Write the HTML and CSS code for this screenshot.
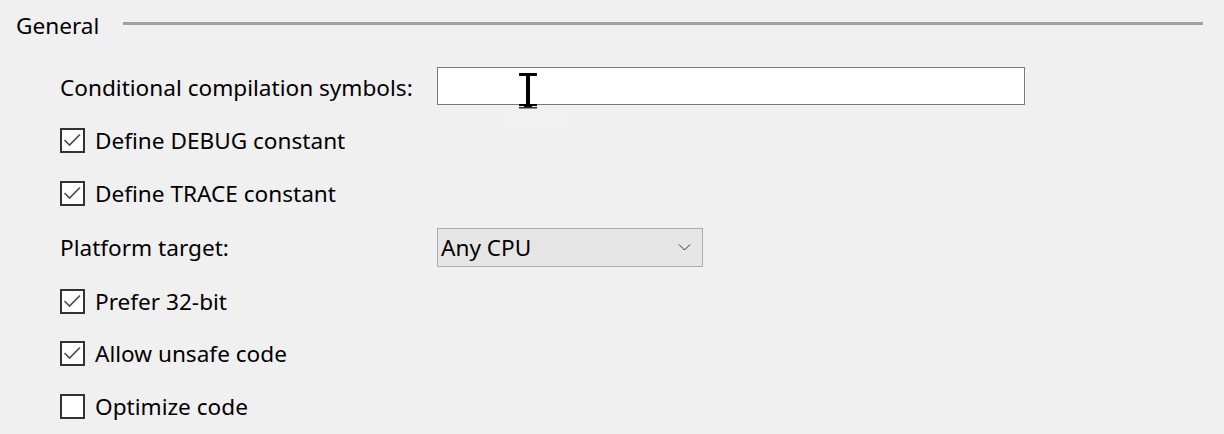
FILE: index.html
```html
<!DOCTYPE html>
<html>
<head>
<meta charset="utf-8">
<link rel="stylesheet" href="styles.css">
</head>
<body>
<div class="page">
  <div class="section-head">
    <span class="section-title">General</span>
    <span class="section-rule"></span>
  </div>
  <div class="form">
    <div class="row r1">
      <label class="label">Conditional compilation symbols:</label>
      <div class="textbox">
        <span class="hint"></span>
        <svg class="ibeam" width="20" height="36" viewBox="0 0 20 36"><path d="M0 0h8v3h-2v28h2v3h-8v-3h2v-28h-2z" fill="#000" transform="translate(6 0)"/><rect x="1" y="0" width="18" height="3" fill="#000"/><rect x="1" y="31" width="18" height="2" fill="#000"/><rect x="1" y="34" width="18" height="1.5" fill="#333"/></svg>
      </div>
    </div>
    <div class="row r2">
      <span class="check on"><svg viewBox="0 0 25 25" width="25" height="25"><path d="M4.5 12l5 5l10.5-10.5" fill="none" stroke="#4a4a4a" stroke-width="1.6"/></svg></span>
      <span class="clabel">Define DEBUG constant</span>
    </div>
    <div class="row r3">
      <span class="check on"><svg viewBox="0 0 25 25" width="25" height="25"><path d="M4.5 12l5 5l10.5-10.5" fill="none" stroke="#4a4a4a" stroke-width="1.6"/></svg></span>
      <span class="clabel">Define TRACE constant</span>
    </div>
    <div class="row r4">
      <label class="label">Platform target:</label>
      <div class="combo">
        <span class="combo-text">Any CPU</span>
        <svg class="chev" width="13" height="8" viewBox="0 0 13 8"><path d="M1 1.5l5.5 5.5l5.5-5.5" fill="none" stroke="#333" stroke-width="1"/></svg>
      </div>
    </div>
    <div class="row r5">
      <span class="check on"><svg viewBox="0 0 25 25" width="25" height="25"><path d="M4.5 12l5 5l10.5-10.5" fill="none" stroke="#4a4a4a" stroke-width="1.6"/></svg></span>
      <span class="clabel">Prefer 32-bit</span>
    </div>
    <div class="row r6">
      <span class="check on"><svg viewBox="0 0 25 25" width="25" height="25"><path d="M4.5 12l5 5l10.5-10.5" fill="none" stroke="#4a4a4a" stroke-width="1.6"/></svg></span>
      <span class="clabel">Allow unsafe code</span>
    </div>
    <div class="row r7">
      <span class="check"></span>
      <span class="clabel">Optimize code</span>
    </div>
  </div>
</div>
</body>
</html>
```
FILE: styles.css
```css
html, body {
  margin: 0;
  padding: 0;
  background: #f0f0f0;
}
body {
  width: 1224px;
  height: 434px;
  overflow: hidden;
  font-family: "Noto Sans", "Open Sans", sans-serif;
  font-size: 22.6px;
  color: #000;
}
.section-head {
  display: flex;
  align-items: center;
  height: 50px;
  padding: 0 21px 0 16px;
}
.section-title {
  padding-right: 24px;
}
.section-rule {
  flex: 1;
  height: 3px;
  background: #a0a0a0;
  margin-top: -4px;
}
.form {
  padding: 10px 0 0 60px;
  display: flex;
  flex-direction: column;
}
.row {
  display: flex;
  align-items: center;
}
.r1 { height: 54px; }
.r2 { height: 53px; }
.r3 { height: 52px; }
.r4 { height: 56px; }
.r5 { height: 52px; }
.r6 { height: 53px; }
.r7 { height: 52px; }
.label {
  width: 377px;
}
.textbox {
  position: relative;
  width: 586px;
  height: 36px;
  background: #fff;
  border: 1px solid #7a7a7a;
  margin-top: -2px;
}
.hint {
  position: absolute;
  left: 67px;
  top: 37px;
  width: 63px;
  height: 25px;
  background: #f1f1f1;
}
.ibeam {
  position: absolute;
  left: 80px;
  top: 5px;
}
.check {
  width: 21px;
  height: 21px;
  border: 2px solid #333;
  background: #fff;
  margin: 0 10px 0 0;
  position: relative;
  flex: none;
}
.check svg {
  position: absolute;
  left: -2px;
  top: -2px;
}
.combo {
  border: 1px solid #acacac;
  background: #e5e5e5;
  display: flex;
  align-items: center;
  justify-content: space-between;
  padding: 0 11px 0 3px;
  box-sizing: border-box;
  width: 266px;
  height: 39px;
}
```
